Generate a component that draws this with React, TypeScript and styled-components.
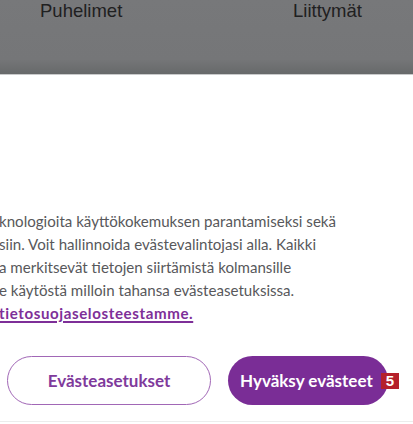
import styled, { createGlobalStyle } from 'styled-components';

const Global = createGlobalStyle`
    html, body {
        margin: 0;
        padding: 0;
        background: #ffffff;
        overflow: hidden;
    }
`;

const lines = [
    'knologioita käyttökokemuksen parantamiseksi sekä',
    'siin. Voit hallinnoida evästevalintojasi alla. Kaikki',
    'a merkitsevät tietojen siirtämistä kolmansille',
    'e käytöstä milloin tahansa evästeasetuksissa.',
];

const App = () => {
    return (
        <Page>
            <Global />
            <Header>
                <NavItem>Puhelimet</NavItem>
                <NavItem>Liittymät</NavItem>
            </Header>
            <Dialog>
                <Body>
                    {lines.map(line => (
                        <Line key={line}>{line}</Line>
                    ))}
                    <Line><PolicyLink href="#">tietosuojaselosteestamme.</PolicyLink></Line>
                </Body>
                <Actions>
                    <Button $variant="outline">Evästeasetukset</Button>
                    <Button $variant="filled">Hyväksy evästeet</Button>
                    <Badge>5</Badge>
                </Actions>
                <Divider />
            </Dialog>
        </Page>
    );
}

export default App;

const Page = styled.div`
    width: 413px;
    height: 424px;
    display: flex;
    flex-direction: column;
    overflow: hidden;
`

const Header = styled.div`
    height: 75px;
    flex-shrink: 0;
    background: linear-gradient(to bottom, #77787a 0%, #757678 80%, #67696a 100%);
    border-bottom: 1px solid #c9cacb;
    box-sizing: border-box;
    display: grid;
    grid-template-columns: 253px 120px;
    padding-left: 40px;
    align-items: start;
`

const NavItem = styled.span`
    font-family: "Liberation Sans", Arial, sans-serif;
    font-size: 18.5px;
    line-height: 21px;
    color: #1f2021;
`

const Dialog = styled.div`
    flex: 1;
    display: flex;
    flex-direction: column;
    background: #ffffff;
`

const Body = styled.div`
    margin-top: 135px;
    display: flex;
    flex-direction: column;
    font-family: Lato, "Noto Sans", sans-serif;
    font-size: 15.1px;
    line-height: 23px;
    color: #58585b;
`

const Line = styled.div`
    white-space: nowrap;
    margin-left: -1px;
`

const PolicyLink = styled.a`
    color: #7e2f98;
    font-weight: 700;
    letter-spacing: 0.6px;
    text-decoration: underline;
    text-decoration-thickness: 2px;
    text-underline-offset: 2px;
`

const Actions = styled.div`
    margin-top: 31px;
    padding-left: 7px;
    display: flex;
    align-items: center;
    gap: 17px;
    position: relative;
    width: 381px;
`

const Button = styled.button<{ $variant: 'outline' | 'filled' }>`
    height: 49px;
    border-radius: 25px;
    font-family: Lato, "Noto Sans", sans-serif;
    font-weight: 700;
    font-size: 17px;
    padding: 0;
    box-sizing: border-box;
    cursor: pointer;
    width: ${p => p.$variant === 'outline' ? '204px' : '160px'};
    background: ${p => p.$variant === 'outline' ? '#ffffff' : '#7a2d96'};
    color: ${p => p.$variant === 'outline' ? '#7f3a9c' : '#ffffff'};
    border: ${p => p.$variant === 'outline' ? '1.5px solid #a167b6' : 'none'};
    text-align: ${p => p.$variant === 'outline' ? 'center' : 'left'};
    padding-left: ${p => p.$variant === 'outline' ? '0' : '12px'};
    white-space: nowrap;
`

const Badge = styled.span`
    position: absolute;
    left: 381px;
    top: 17px;
    width: 18px;
    height: 16px;
    background: #b5202b;
    color: #ffffff;
    font-family: "Liberation Sans", Arial, sans-serif;
    font-weight: 700;
    font-size: 15px;
    line-height: 16px;
    text-align: center;
`

const Divider = styled.div`
    margin-top: auto;
    margin-bottom: 2px;
    height: 1px;
    background: #ececec;
`
